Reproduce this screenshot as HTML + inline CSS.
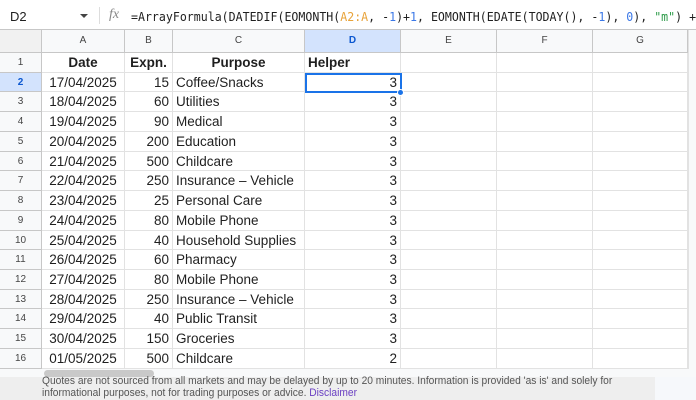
<!DOCTYPE html><html><head><style>
body{margin:0;width:696px;height:400px;overflow:hidden;background:#fff;font-family:"Liberation Sans",Arial,sans-serif;position:relative}
.a{position:absolute;box-sizing:border-box}
.fb{top:0;left:0;width:696px;height:30px;border-bottom:1px solid #c7c7c7;background:#fff;overflow:hidden}
.hl{background:#f8f9fa;border-right:1px solid #c7c7c7;border-bottom:1px solid #c7c7c7;color:#444;font-size:10px;text-align:center}
.c{border-right:1px solid #e2e2e2;border-bottom:1px solid #e2e2e2;font-size:13.5px;color:#1f1f1f;white-space:nowrap;overflow:hidden;padding:0 3px;line-height:19px}
</style></head><body>
<div class="a fb">
<div class="a" style="left:10px;top:9px;font-size:13px;color:#1f1f1f">D2</div>
<div class="a" style="left:80px;top:14px;width:0;height:0;border-left:4px solid transparent;border-right:4px solid transparent;border-top:4px solid #444"></div>
<div class="a" style="left:99px;top:7px;width:1px;height:17px;background:#ddd"></div>
<div class="a" style="left:109px;top:7px;font-size:14px;font-style:italic;color:#888;font-family:'Liberation Serif',serif">fx</div>
<div class="a" style="left:131px;top:9px;font-size:12.4px;color:#1f1f1f;font-family:'DejaVu Sans Mono','Liberation Mono',monospace;white-space:nowrap;transform:scaleX(0.935);transform-origin:left">=ArrayFormula(DATEDIF(EOMONTH(<span style="color:#e8a33a">A2:A</span>, -<span style="color:#3b78e7">1</span>)+<span style="color:#3b78e7">1</span>, EOMONTH(EDATE(TODAY(), -<span style="color:#3b78e7">1</span>), <span style="color:#3b78e7">0</span>), <span style="color:#2e9c4a">"m"</span>) +</div>
</div>
<div id="g"></div>
<script>
const cols=[[42,125,'A'],[125,173,'B'],[173,305,'C'],[305,401,'D'],[401,497,'E'],[497,593,'F'],[593,688,'G']];
const data=[["17/04/2025",15,"Coffee/Snacks",3],["18/04/2025",60,"Utilities",3],["19/04/2025",90,"Medical",3],["20/04/2025",200,"Education",3],["21/04/2025",500,"Childcare",3],["22/04/2025",250,"Insurance – Vehicle",3],["23/04/2025",25,"Personal Care",3],["24/04/2025",80,"Mobile Phone",3],["25/04/2025",40,"Household Supplies",3],["26/04/2025",60,"Pharmacy",3],["27/04/2025",80,"Mobile Phone",3],["28/04/2025",250,"Insurance – Vehicle",3],["29/04/2025",40,"Public Transit",3],["30/04/2025",150,"Groceries",3],["01/05/2025",500,"Childcare",2]];
let h='';
h+=`<div class="a hl" style="left:0;top:30px;width:42px;height:23px;background:#f1f1f1"></div>`;
cols.forEach(c=>{const sel=c[2]=='D';h+=`<div class="a hl" style="left:${c[0]}px;top:30px;width:${c[1]-c[0]}px;height:23px;line-height:22px;${sel?'background:#d3e3fd;color:#0b57d0;font-weight:bold':''}">${c[2]}</div>`});
const RH=19.73;
for(let i=0;i<16;i++){const t=53+i*RH;const sel=i==1;
h+=`<div class="a hl" style="left:0;top:${t}px;width:42px;height:${RH}px;line-height:${RH}px;${sel?'background:#d3e3fd;color:#0b57d0;font-weight:bold':''}">${i+1}</div>`;
let v=i==0?['Date','Expn.','Purpose','Helper']:data[i-1];
cols.forEach((c,j)=>{let txt=j<4?v[j]:'';let st='';
if(i==0){st=j==3?'font-weight:bold':'font-weight:bold;text-align:center'}
else if(j==1||j==3)st='text-align:right';
if(i>0&&j==0)st='text-align:center';
h+=`<div class="a c" style="left:${c[0]}px;top:${t}px;width:${c[1]-c[0]}px;height:${RH}px;${st}">${txt}</div>`});}
h+=`<div class="a" style="left:305px;top:${53+RH}px;width:97px;height:${RH+1}px;border:2px solid #1a73e8"></div>`;
h+=`<div class="a" style="left:397px;top:${53+2*RH-3}px;width:7px;height:7px;border-radius:50%;background:#1a73e8;border:1px solid #fff"></div>`;
document.getElementById('g').innerHTML=h;
</script>
<div class="a" style="left:688px;top:30px;width:8px;height:348px;background:#f8f9fa;border-left:1px solid #e2e2e2"></div>
<div class="a" style="left:0;top:369px;width:696px;height:9px;background:#f8f9fa"></div>
<div class="a" style="left:44px;top:370px;width:110px;height:7px;border-radius:4px;background:#c9c9c9"></div>
<div class="a" style="left:0;top:377px;width:655px;height:23px;background:#eeeeee"></div>
<div class="a" style="left:655px;top:377px;width:41px;height:23px;background:#f6f8fb"></div>
<div class="a" style="left:42px;top:376px;width:640px;font-size:11px;line-height:11.5px;color:#555;transform:scaleX(0.93);transform-origin:left">Quotes are not sourced from all markets and may be delayed by up to 20 minutes. Information is provided 'as is' and solely for informational purposes, not for trading purposes or advice. <span style="color:#6a3fc2">Disclaimer</span></div>
</body></html>
